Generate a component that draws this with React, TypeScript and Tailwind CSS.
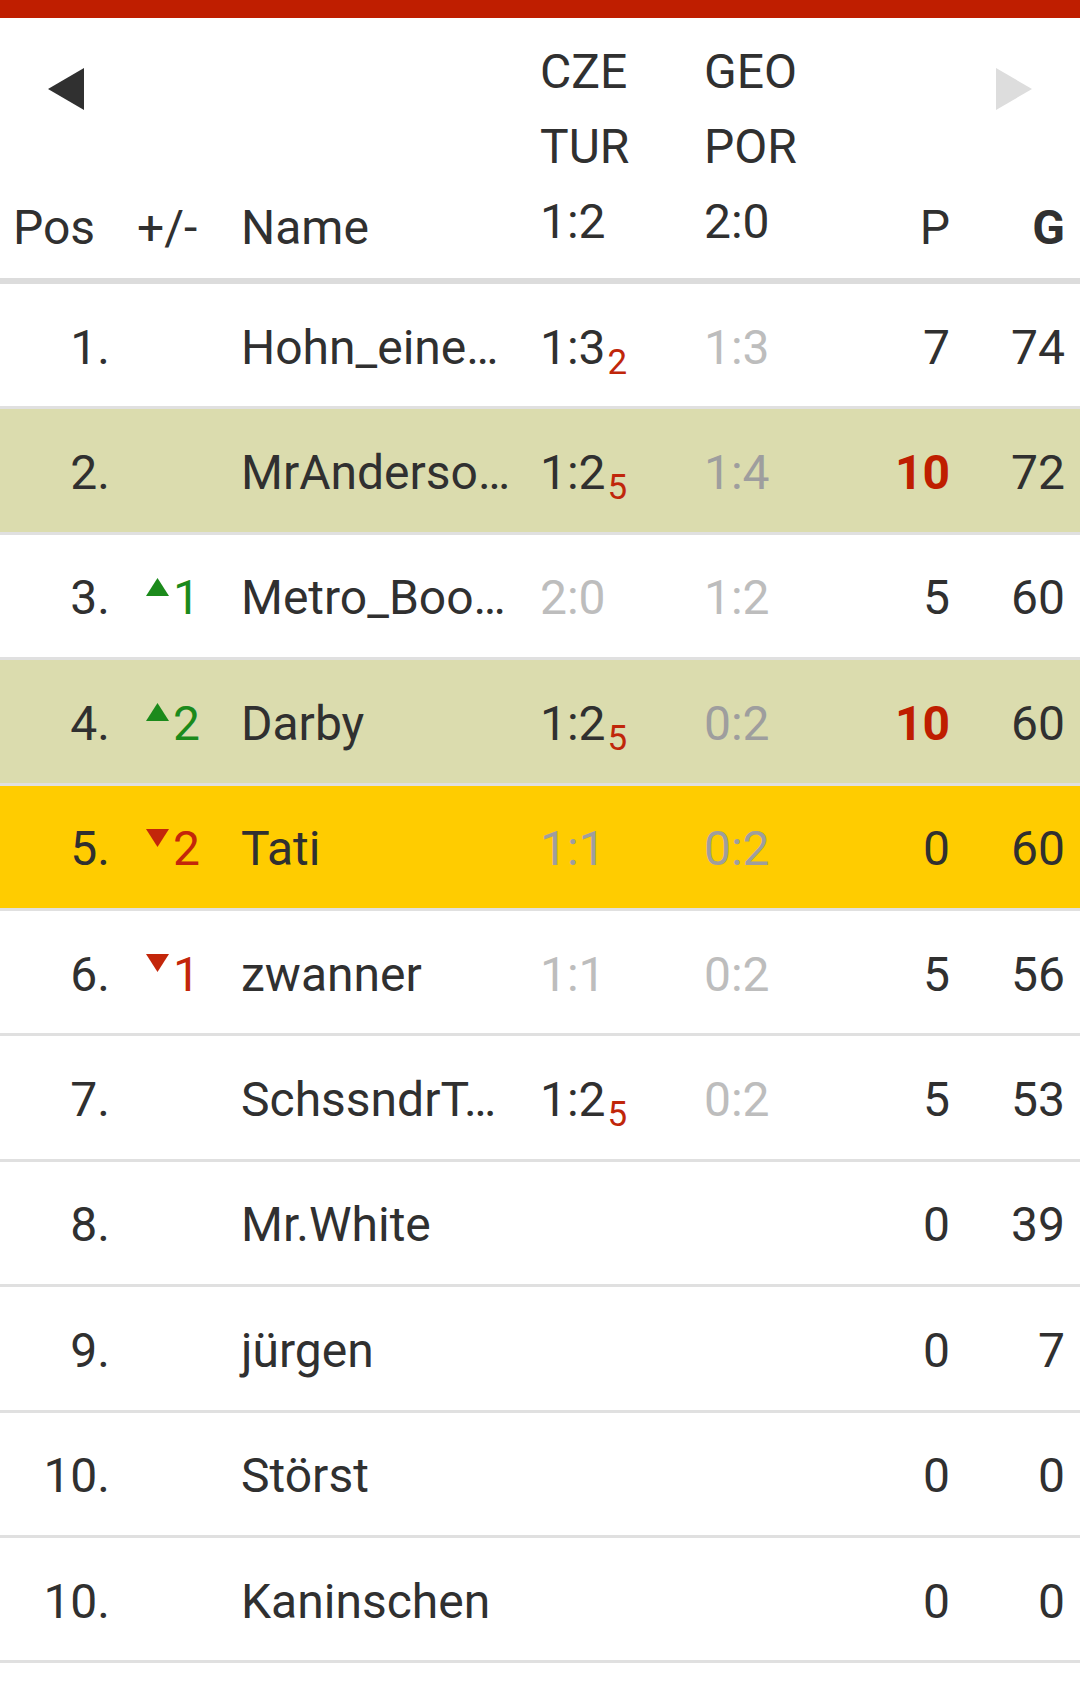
type Score = { s: string; sub?: string; dim?: boolean };
type Change = { dir: "up" | "down"; n: number };
type Row = {
  pos: string;
  change?: Change;
  name: string;
  m1?: Score;
  m2?: Score;
  p: string;
  hot?: boolean;
  g: string;
  tone?: "green" | "yellow";
};

const rows: Row[] = [
  { pos: "1.", name: "Hohn_eine…", m1: { s: "1:3", sub: "2" }, m2: { s: "1:3", dim: true }, p: "7", g: "74" },
  { pos: "2.", name: "MrAnderso…", m1: { s: "1:2", sub: "5" }, m2: { s: "1:4", dim: true }, p: "10", hot: true, g: "72", tone: "green" },
  { pos: "3.", change: { dir: "up", n: 1 }, name: "Metro_Boo…", m1: { s: "2:0", dim: true }, m2: { s: "1:2", dim: true }, p: "5", g: "60" },
  { pos: "4.", change: { dir: "up", n: 2 }, name: "Darby", m1: { s: "1:2", sub: "5" }, m2: { s: "0:2", dim: true }, p: "10", hot: true, g: "60", tone: "green" },
  { pos: "5.", change: { dir: "down", n: 2 }, name: "Tati", m1: { s: "1:1", dim: true }, m2: { s: "0:2", dim: true }, p: "0", g: "60", tone: "yellow" },
  { pos: "6.", change: { dir: "down", n: 1 }, name: "zwanner", m1: { s: "1:1", dim: true }, m2: { s: "0:2", dim: true }, p: "5", g: "56" },
  { pos: "7.", name: "SchssndrT…", m1: { s: "1:2", sub: "5" }, m2: { s: "0:2", dim: true }, p: "5", g: "53" },
  { pos: "8.", name: "Mr.White", p: "0", g: "39" },
  { pos: "9.", name: "jürgen", p: "0", g: "7" },
  { pos: "10.", name: "Störst", p: "0", g: "0" },
  { pos: "10.", name: "Kaninschen", p: "0", g: "0" },
];

const cols = "grid grid-cols-[137px_104px_299px_164px_158px_88px_130px]";

function ScoreCell({ sc, tinted }: { sc?: Score; tinted: boolean }) {
  if (!sc) return <div />;
  const dim = tinted ? "text-[#9e9e9e]" : "text-[#bdbdbd]";
  return (
    <div className={`whitespace-nowrap ${sc.dim ? dim : ""}`}>
      {sc.s}
      {sc.sub && (
        <span className="relative top-[10px] ml-[2px] text-[35px] text-[#c0260a]">{sc.sub}</span>
      )}
    </div>
  );
}

function Tri({ dir }: { dir: "up" | "down" }) {
  return (
    <svg width="23" height="18" viewBox="0 0 23 18" className="relative -top-[15px] mr-[4px] inline-block">
      {dir === "up" ? (
        <polygon points="11.5,0 23,18 0,18" fill="#1b8a1b" />
      ) : (
        <polygon points="0,0 23,0 11.5,18" fill="#c3260a" />
      )}
    </svg>
  );
}

export default function App() {
  return (
    <div className="min-h-[1692px] w-[1080px] bg-white text-[48px] text-[#303030] [font-family:Roboto,'Noto_Sans',sans-serif]">
      <div className="h-[18px] bg-[#bf1e00]" />

      {/* header */}
      <div className={`${cols} h-[266px] border-b-[6px] border-[#dcdcdc] leading-[56px]`}>
        <div className="flex flex-col justify-between pb-[22px] pl-[13px] pt-[50px]">
          <svg width="36" height="42" viewBox="0 0 36 42" className="ml-[35px]">
            <polygon points="36,0 36,42 0,21" fill="#303030" />
          </svg>
          <span>Pos</span>
        </div>
        <div className="flex flex-col justify-end pb-[22px]">+/-</div>
        <div className="flex flex-col justify-end pb-[22px]">Name</div>
        <div className="flex flex-col justify-end pb-[19px] leading-[75px]">
          <span>CZE</span>
          <span>TUR</span>
          <span>1:2</span>
        </div>
        <div className="flex flex-col justify-end pb-[19px] leading-[75px]">
          <span>GEO</span>
          <span>POR</span>
          <span>2:0</span>
        </div>
        <div className="flex flex-col justify-end pb-[22px] text-right">P</div>
        <div className="flex flex-col justify-between pb-[22px] pr-[15px] pt-[50px]">
          <svg width="36" height="42" viewBox="0 0 36 42" className="ml-[46px]">
            <polygon points="0,0 0,42 36,21" fill="#dddddd" />
          </svg>
          <span className="text-right font-bold">G</span>
        </div>
      </div>

      {rows.map((r, i) => {
        const bg = r.tone === "green" ? "bg-[#dbdcae]" : r.tone === "yellow" ? "bg-[#ffcc00]" : "bg-white";
        const tinted = !!r.tone;
        return (
          <div
            key={i}
            className={`${cols} ${bg} h-[125.4px] items-center border-b-[3px] border-[#e0e0e0] pt-[5px] leading-none`}
          >
            <div className="pr-[27px] text-right">{r.pos}</div>
            <div className="whitespace-nowrap pl-[9px]">
              {r.change && (
                <>
                  <Tri dir={r.change.dir} />
                  <span className={r.change.dir === "up" ? "text-[#1b8a1b]" : "text-[#c3260a]"}>
                    {r.change.n}
                  </span>
                </>
              )}
            </div>
            <div className="whitespace-nowrap">{r.name}</div>
            <ScoreCell sc={r.m1} tinted={tinted} />
            <ScoreCell sc={r.m2} tinted={tinted} />
            <div className={`text-right ${r.hot ? "font-bold text-[#bf1e00]" : ""}`}>{r.p}</div>
            <div className="pr-[15px] text-right">{r.g}</div>
          </div>
        );
      })}
    </div>
  );
}
